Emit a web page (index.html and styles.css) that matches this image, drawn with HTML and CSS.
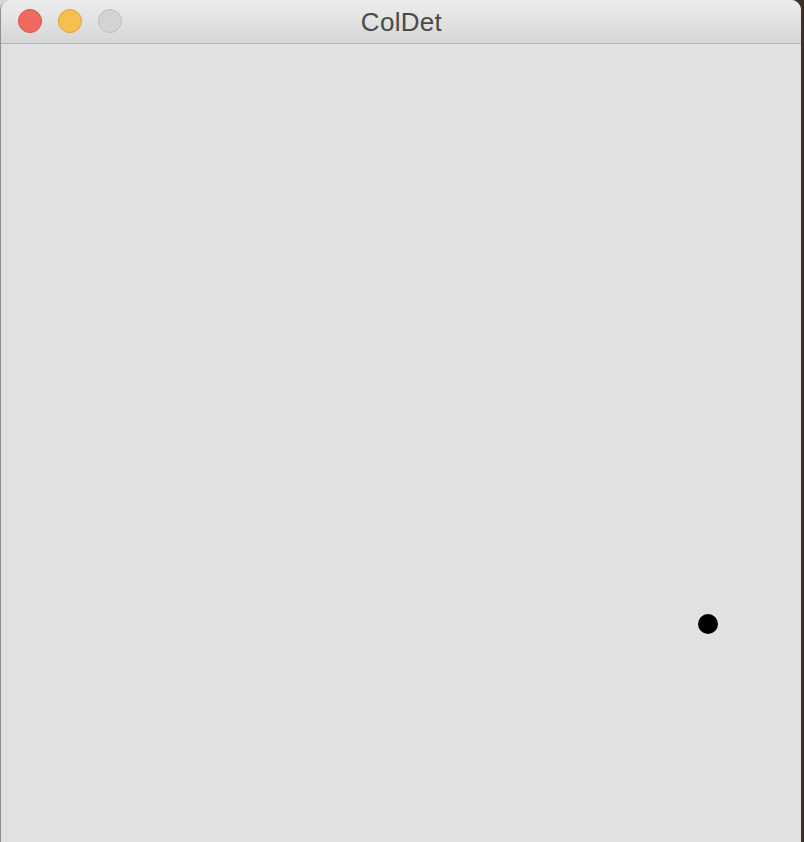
FILE: index.html
```html
<!DOCTYPE html>
<html>
<head>
<meta charset="utf-8">
<title>ColDet</title>
<link rel="stylesheet" href="styles.css">
</head>
<body>
<div class="window">
  <div class="titlebar">
    <div class="lights">
      <span class="light close"></span>
      <span class="light minimize"></span>
      <span class="light zoom"></span>
    </div>
    <div class="title">ColDet</div>
  </div>
  <div class="canvas">
    <span class="ball"></span>
  </div>
</div>
</body>
</html>
```
FILE: styles.css
```css
html, body {
  margin: 0;
  padding: 0;
  width: 804px;
  height: 842px;
  overflow: hidden;
  background: linear-gradient(to right, #d8d8d8 0 50%, #3b3129 50% 100%);
}
.window {
  width: 801px;
  height: 842px;
  box-sizing: border-box;
  border-left: 1px solid #8f8f8f;
  border-radius: 10px 10px 0 0;
  overflow: hidden;
  display: flex;
  flex-direction: column;
  background: #e1e1e1;
}
.titlebar {
  position: relative;
  height: 43px;
  flex: none;
  border-bottom: 1px solid #b3b3b3;
  background: linear-gradient(to bottom, #ececec 0%, #e4e4e4 40%, #d6d6d6 100%);
  display: flex;
  align-items: center;
  justify-content: center;
}
.lights {
  position: absolute;
  left: 17px;
  top: 9px;
  display: flex;
  gap: 16px;
}
.light {
  width: 24px;
  height: 24px;
  box-sizing: border-box;
  border-radius: 50%;
  display: block;
}
.close { background: #ee6a5e; border: 1px solid #d6534a; }
.minimize { background: #f6bf4f; border: 1px solid #dca33c; }
.zoom { background: #d3d3d3; border: 1px solid #bebebe; }
.title {
  font-family: "Liberation Sans", Arial, sans-serif;
  font-size: 26px;
  color: #4a4a4a;
  margin-left: 1px;
  margin-top: 2px;
  letter-spacing: 0.3px;
}
.canvas {
  position: relative;
  flex: 1;
  background: #e1e1e1;
}
.ball {
  position: absolute;
  left: 697px;
  top: 570px;
  width: 20px;
  height: 20px;
  border-radius: 50%;
  background: #000;
}
```
